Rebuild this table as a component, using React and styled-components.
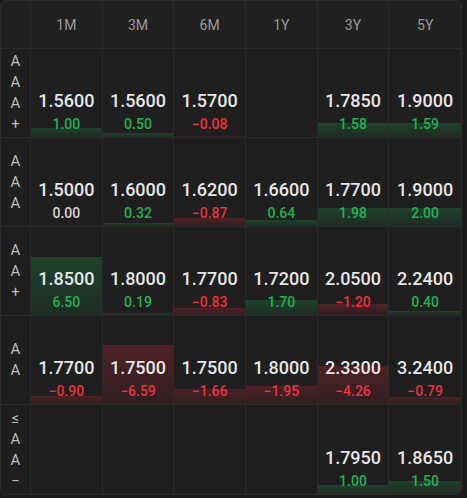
import React from 'react'
import styled, { createGlobalStyle } from 'styled-components'

const Global = createGlobalStyle`
  body {
    margin: 0;
    background: #1b1b1b;
    font-family: Roboto, "Liberation Sans", sans-serif;
  }
`

const Table = styled.div`
  width: 462px;
  height: 495px;
  box-sizing: border-box;
  display: grid;
  grid-template-columns: 30px repeat(6, 1fr);
  grid-template-rows: 48px repeat(5, 1fr);
  background: #1f1f1f;
  border: 1px solid #2c2c2c;
  border-radius: 6px;
  overflow: hidden;
`

const Box = styled.div`
  border-right: ${(p) => (p.$lastCol ? 'none' : '1px solid #2b2b2b')};
  border-bottom: ${(p) => (p.$lastRow ? 'none' : '1px solid #2b2b2b')};
  min-width: 0;
`

const Head = styled(Box)`
  display: flex;
  align-items: center;
  justify-content: center;
  color: #9a9a9a;
  font-size: 14px;
  background: #212121;
`

const Label = styled(Box)`
  display: flex;
  flex-direction: column;
  align-items: center;
  justify-content: center;
  color: #bdbdbd;
  font-size: 15px;
  line-height: 21px;
`

const Cell = styled(Box)`
  display: flex;
  flex-direction: column;
  align-items: center;
  justify-content: flex-end;
  padding-bottom: 4px;
  background-repeat: no-repeat;
  background-position: bottom;
  background-image: ${(p) =>
    p.$tone === 'up'
      ? 'linear-gradient(to bottom, rgba(30, 150, 75, 0.30), rgba(30, 150, 75, 0.10))'
      : p.$tone === 'down'
      ? 'linear-gradient(to bottom, rgba(180, 35, 50, 0.32), rgba(180, 35, 50, 0.10))'
      : 'none'};
`

const Value = styled.div`
  color: #e6e6e6;
  font-size: 18px;
  font-weight: 500;
  line-height: 22px;
`

const Change = styled.div`
  margin-top: 3px;
  font-size: 14px;
  font-weight: 500;
  line-height: 18px;
  color: ${(p) => (p.$tone === 'up' ? '#1db352' : p.$tone === 'down' ? '#f0303c' : '#d6d6d6')};
`

const terms = ['1M', '3M', '6M', '1Y', '3Y', '5Y']

const rows = [
  { label: ['A', 'A', 'A', '+'], cells: [[1.56, 1.0], [1.56, 0.5], [1.57, -0.08], null, [1.785, 1.58], [1.9, 1.59]] },
  { label: ['A', 'A', 'A'], cells: [[1.5, 0], [1.6, 0.32], [1.62, -0.87], [1.66, 0.64], [1.77, 1.98], [1.9, 2.0]] },
  { label: ['A', 'A', '+'], cells: [[1.85, 6.5], [1.8, 0.19], [1.77, -0.83], [1.72, 1.7], [2.05, -1.2], [2.24, 0.4]] },
  { label: ['A', 'A'], cells: [[1.77, -0.9], [1.75, -6.59], [1.75, -1.66], [1.8, -1.95], [2.33, -4.26], [3.24, -0.79]] },
  { label: ['≤', 'A', 'A', '−'], cells: [null, null, null, null, [1.795, 1.0], [1.865, 1.5]] },
]

const fmtChange = (v) => (v < 0 ? '−' + Math.abs(v).toFixed(2) : v.toFixed(2))

function RateCell({ data, lastCol, lastRow }) {
  if (!data) return <Cell $lastCol={lastCol} $lastRow={lastRow} />
  const [value, change] = data
  const tone = change > 0 ? 'up' : change < 0 ? 'down' : 'flat'
  return (
    <Cell
      $tone={tone}
      $lastCol={lastCol}
      $lastRow={lastRow}
      style={{ backgroundSize: `100% ${Math.abs(change) * 9}px` }}
    >
      <Value>{value.toFixed(4)}</Value>
      <Change $tone={tone}>{fmtChange(change)}</Change>
    </Cell>
  )
}

export default function App() {
  return (
    <>
      <Global />
      <Table>
        <Head />
        {terms.map((t, i) => (
          <Head key={t} $lastCol={i === terms.length - 1}>{t}</Head>
        ))}
        {rows.map((row, r) => {
          const lastRow = r === rows.length - 1
          return (
            <React.Fragment key={r}>
              <Label $lastRow={lastRow}>
                {row.label.map((ch, k) => (
                  <span key={k}>{ch}</span>
                ))}
              </Label>
              {row.cells.map((c, i) => (
                <RateCell key={i} data={c} lastCol={i === 5} lastRow={lastRow} />
              ))}
            </React.Fragment>
          )
        })}
      </Table>
    </>
  )
}
